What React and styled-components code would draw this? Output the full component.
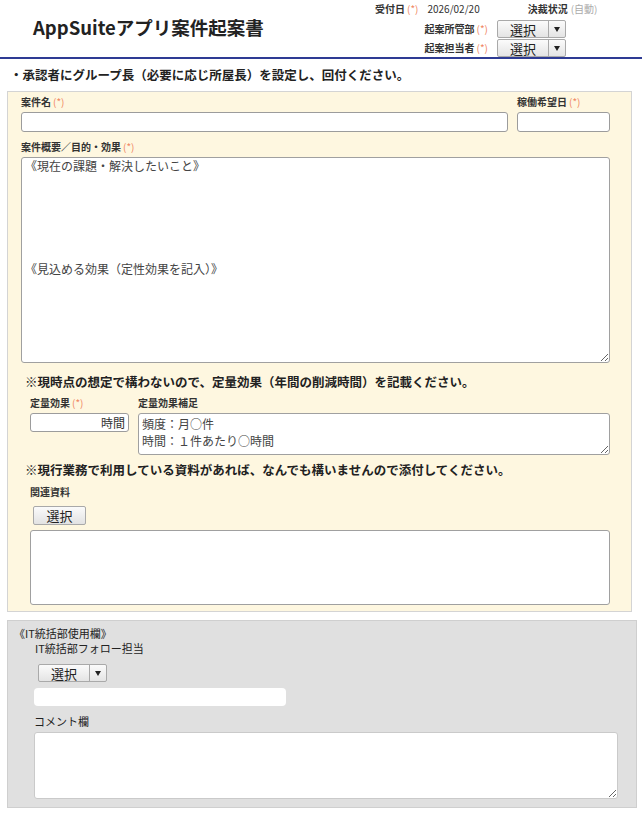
import React from 'react';
import styled, { createGlobalStyle } from 'styled-components';

const Global = createGlobalStyle`
  html, body { margin: 0; padding: 0; background: #fff; }
  body { font-family: "Noto Sans CJK JP", "Noto Sans", sans-serif; color: #222; }
  * { box-sizing: border-box; }
`;

const Page = styled.div`
  width: 642px;
`;

const Header = styled.header`
  display: flex;
  height: 59px;
  border-bottom: 2px solid #2e3b94;
`;

const Title = styled.h1`
  margin: 0;
  padding: 0 0 3px 33px;
  align-self: center;
  font-size: 18.5px;
  font-weight: bold;
  line-height: 1;
  color: #222;
`;

const Meta = styled.div`
  margin-left: auto;
  margin-right: 42px;
  width: 225px;
  display: flex;
  flex-direction: column;
`;

const MetaRow = styled.div`
  display: flex;
  align-items: center;
  height: 17px;
  padding-top: 1px;
  font-size: 10px;
  line-height: 14px;
`;

const Label = styled.span`
  font-size: 10px;
  font-weight: bold;
  line-height: 14px;
  color: #333;
  white-space: nowrap;
  margin-left: ${p => p.$ml || 0}px;
`;

const FieldLabel = styled(Label)`
  display: block;
`;

const Req = styled.span`
  font-weight: normal;
  color: #f08662;
  margin-left: 2px;
`;

const Plain = styled.span`
  font-size: 10px;
  color: ${p => p.$muted ? '#aaa' : '#333'};
  margin-left: ${p => p.$ml || 0}px;
`;

const MetaGrid = styled.div`
  display: grid;
  grid-template-columns: 113px 69px;
  column-gap: 9px;
  row-gap: 1px;
  margin-top: 4px;
  align-items: center;
  justify-items: end;
`;

const SelectBox = styled.div`
  display: flex;
  width: 69px;
  height: 18px;
  border: 1px solid #a9a9a9;
  border-radius: 2px;
  background: linear-gradient(#fbfbfb, #e4e4e4);
  margin-left: ${p => p.$ml || 0}px;
  margin-top: ${p => p.$mt || 0}px;
`;

const SelectText = styled.span`
  flex: 1;
  display: flex;
  align-items: center;
  justify-content: center;
  font-size: 13px;
  line-height: 1;
  color: #222;
`;

const SelectArrow = styled.span`
  width: 17px;
  border-left: 1px solid #a9a9a9;
  display: flex;
  align-items: center;
  justify-content: center;
  &::after {
    content: '';
    border-top: 5px solid #222;
    border-left: 3.5px solid transparent;
    border-right: 3.5px solid transparent;
  }
`;

const Select = ({ ml, mt }) => (
  <SelectBox $ml={ml} $mt={mt}>
    <SelectText>選択</SelectText>
    <SelectArrow />
  </SelectBox>
);

const Instruction = styled.p`
  margin: 0;
  padding: 7px 10px 7px;
  font-size: 12.5px;
  font-weight: bold;
  line-height: 18px;
  color: #222;
`;

const YellowPanel = styled.section`
  margin: 0 10px 0 7px;
  border: 1px solid #d4d4d4;
  background: #fef7e0;
  padding: 3px 21px 6px 13px;
`;

const Row = styled.div`
  display: flex;
  gap: 9px;
  margin-top: ${p => p.$mt || 0}px;
`;

const Col = styled.div`
  display: flex;
  flex-direction: column;
  width: ${p => p.$w ? `${p.$w}px` : 'auto'};
  flex: ${p => p.$w ? 'none' : 1};
`;

const TextInput = styled.div`
  height: ${p => p.$h || 20}px;
  margin-top: 3px;
  border: 1px solid #9c9c9c;
  border-radius: 3px;
  background: #fff;
  display: flex;
  align-items: center;
  justify-content: flex-end;
  padding: 0 3px;
  font-size: 12px;
  color: #333;
`;

const Area = styled.textarea`
  display: block;
  width: 100%;
  height: ${p => p.$h}px;
  margin: ${p => p.$mt || 0}px 0 0 0;
  border: 1px solid ${p => p.$light ? '#cacaca' : '#a0a0a0'};
  border-radius: 3px;
  background: #fff;
  padding: 1px 3px;
  font-family: "Noto Sans CJK JP", "Noto Sans", sans-serif;
  font-size: 12px;
  line-height: ${p => p.$lh || 15}px;
  color: #444;
  outline: none;
`;

const Note = styled.p`
  margin: ${p => p.$mt || 0}px 0 0 0;
  padding-left: 4px;
  font-size: 12.5px;
  font-weight: bold;
  line-height: 18px;
  color: #222;
`;

const Sub = styled.div`
  padding-left: 9px;
  margin-top: ${p => p.$mt || 0}px;
`;

const PlainButton = styled.button`
  display: flex;
  align-items: center;
  justify-content: center;
  width: 53px;
  height: 19px;
  margin: 7px 0 0 3px;
  padding: 0;
  border: 1px solid #a9a9a9;
  border-radius: 2px;
  background: linear-gradient(#fbfbfb, #e2e2e2);
  font-family: "Noto Sans CJK JP", sans-serif;
  font-size: 13px;
  line-height: 1;
  color: #222;
`;

const AttachBox = styled.div`
  height: 75px;
  margin-top: 5px;
  border: 1px solid #a0a0a0;
  border-radius: 3px;
  background: #fff;
`;

const GrayPanel = styled.section`
  margin: 8px 5px 5px 7px;
  background: #e0e0e0;
  border: 1px solid #cfcfcf;
  padding: 5px 18px 8px 6px;
`;

const GrayText = styled.div`
  font-size: 11px;
  line-height: 14px;
  color: #222;
  padding-left: ${p => p.$pl || 0}px;
  margin-top: ${p => p.$mt || 0}px;
`;

const WhiteField = styled.div`
  width: 252px;
  height: 18px;
  margin: 6px 0 0 20px;
  background: #fff;
  border-radius: 4px;
`;

const CommentWrap = styled.div`
  padding-left: 20px;
`;

export default function App() {
  return (
    <Page>
      <Global />
      <Header>
        <Title>AppSuiteアプリ案件起案書</Title>
        <Meta>
          <MetaRow>
            <Label>受付日<Req>(*)</Req></Label>
            <Plain $ml={9}>2026/02/20</Plain>
            <Label $ml={48}>決裁状況</Label>
            <Plain $muted $ml={3}>(自動)</Plain>
          </MetaRow>
          <MetaGrid>
            <Label>起案所管部<Req>(*)</Req></Label>
            <Select />
            <Label>起案担当者<Req>(*)</Req></Label>
            <Select />
          </MetaGrid>
        </Meta>
      </Header>

      <Instruction>・承認者にグループ長（必要に応じ所屋長）を設定し、回付ください。</Instruction>

      <YellowPanel>
        <Row>
          <Col>
            <FieldLabel>案件名<Req>(*)</Req></FieldLabel>
            <TextInput />
          </Col>
          <Col $w={93}>
            <FieldLabel>稼働希望日<Req>(*)</Req></FieldLabel>
            <TextInput />
          </Col>
        </Row>
        <Row $mt={8}>
          <Col>
            <FieldLabel>案件概要／目的・効果<Req>(*)</Req></FieldLabel>
            <Area
              $h={206}
              $mt={3}
              $lh={14.7}
              readOnly
              defaultValue={'《現在の課題・解決したいこと》\n\n\n\n\n\n\n《見込める効果（定性効果を記入）》'}
            />
          </Col>
        </Row>

        <Note $mt={10}>※現時点の想定で構わないので、定量効果（年間の削減時間）を記載ください。</Note>
        <Sub $mt={5}>
          <Row>
            <Col $w={99}>
              <FieldLabel>定量効果<Req>(*)</Req></FieldLabel>
              <TextInput $h={19}>時間</TextInput>
            </Col>
            <Col>
              <FieldLabel>定量効果補足</FieldLabel>
              <Area
                $h={42}
                $mt={3}
                $lh={17}
                readOnly
                defaultValue={'頻度：月○件\n時間：１件あたり○時間'}
              />
            </Col>
          </Row>
        </Sub>

        <Note $mt={6}>※現行業務で利用している資料があれば、なんでも構いませんので添付してください。</Note>
        <Sub $mt={6}>
          <FieldLabel>関連資料</FieldLabel>
          <PlainButton>選択</PlainButton>
          <AttachBox />
        </Sub>
      </YellowPanel>

      <GrayPanel>
        <GrayText>《IT統括部使用欄》</GrayText>
        <GrayText $pl={21} $mt={1}>IT統括部フォロー担当</GrayText>
        <Select ml={24} mt={9} />
        <WhiteField />
        <GrayText $pl={20} $mt={8}>コメント欄</GrayText>
        <CommentWrap>
          <Area $h={67} $mt={4} $light readOnly defaultValue="" />
        </CommentWrap>
      </GrayPanel>
    </Page>
  );
}
